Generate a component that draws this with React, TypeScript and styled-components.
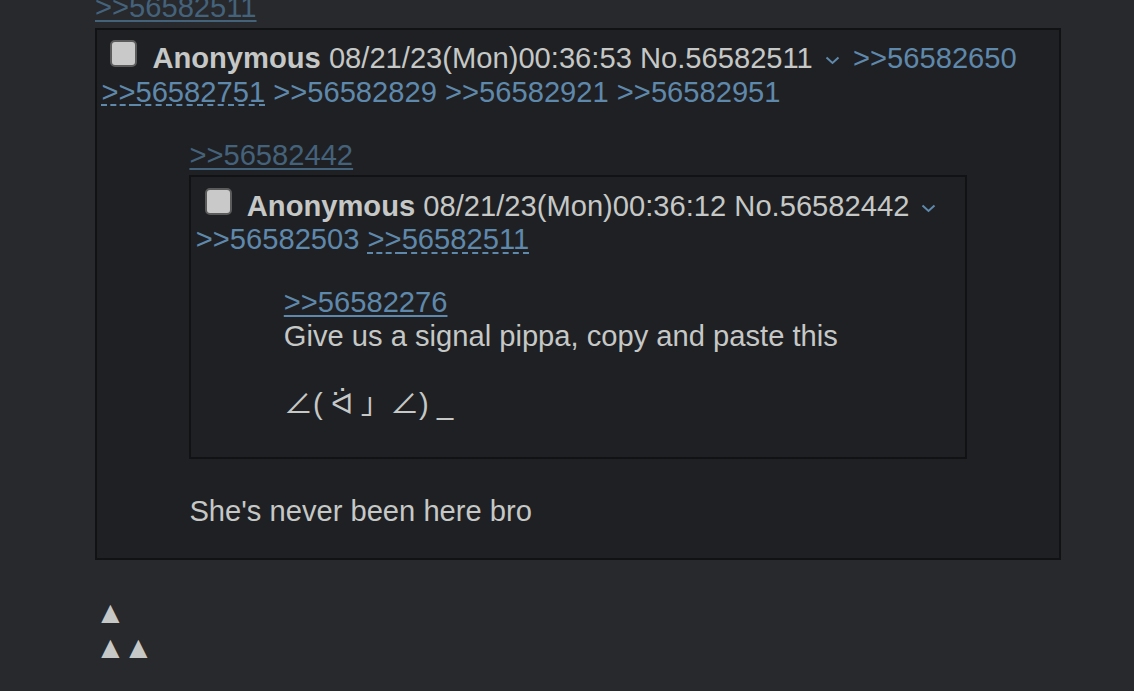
import React from "react";
import styled, { createGlobalStyle } from "styled-components";

const GlobalStyle = createGlobalStyle`
  html, body {
    margin: 0;
    padding: 0;
    background: #27292d;
    overflow: hidden;
  }
  body {
    font-family: "Liberation Sans", Arial, "Noto Sans CJK JP", sans-serif;
    font-size: 29.15px;
    line-height: 33.7px;
    color: #c5c8c6;
  }
`;

const Page = styled.div`
  margin-top: -9px;
  padding-left: 95px;
  width: 966px;
`;

const Line = styled.div``;

const QuoteLink = styled.a<{ $dim?: boolean; $dashed?: boolean; $plain?: boolean }>`
  color: ${(p) => (p.$dim ? "#45627b" : "#5f89ac")};
  cursor: pointer;
  text-decoration-line: ${(p) => (p.$plain ? "none" : "underline")};
  text-decoration-style: ${(p) => (p.$dashed ? "dashed" : "solid")};
  text-decoration-thickness: 2px;
  text-underline-offset: 3px;
`;

const Post = styled.div`
  box-sizing: border-box;
  margin: 3px 0;
  border: 2px solid #111213;
  background: #1f2023;
  padding: 4.4px;
`;

const Header = styled.div``;

const Check = styled.span`
  display: inline-block;
  box-sizing: border-box;
  width: 27px;
  height: 27px;
  margin: 6px 15px 1px 9px;
  border: 2px solid #5b5b5b;
  border-radius: 5px;
  background: #c9c9c9;
  vertical-align: baseline;
`;

const Name = styled.span`
  font-weight: bold;
  color: #c5c8c6;
`;

const Meta = styled.span`
  color: #c5c8c6;
`;

const MenuButton = styled.span`
  display: inline-block;
  width: 24px;
  padding-left: 4px;
  box-sizing: border-box;
  vertical-align: middle;
  line-height: 0;
  svg {
    display: block;
  }
`;

const Body = styled.blockquote<{ $mb?: number }>`
  margin: 29.15px 88px ${(p) => (p.$mb ?? 29.15)}px;
  padding: 0;
`;

const Text = styled.div<{ $tall?: boolean }>`
  line-height: ${(p) => (p.$tall ? "35.7px" : "33.7px")};
`;

const BlankLine = styled.div`
  height: 33.7px;
`;

const Nav = styled.div`
  margin-top: 36px;
  color: #c5c8c6;
`;

const Arrow = styled.span`
  display: inline-block;
  width: 28px;
  font-size: 31px;
`;

const Chevron = () => (
  <MenuButton>
    <svg width="15" height="9" viewBox="0 0 15 9">
      <path d="M1.5 1.5 L7.5 7 L13.5 1.5" fill="none" stroke="#5f89ac" strokeWidth="2" />
    </svg>
  </MenuButton>
);

type PostHeaderProps = {
  date: string;
  no: string;
  backlinks: { id: string; dashed?: boolean }[];
};

const PostHeader = ({ date, no, backlinks }: PostHeaderProps) => (
  <Header>
    <Check />
    <Name>Anonymous</Name> <Meta>{date}</Meta> <Meta>No.{no}</Meta> <Chevron />
    {backlinks.map((b) => (
      <React.Fragment key={b.id}>
        {" "}
        <QuoteLink $plain={!b.dashed} $dashed={b.dashed}>
          &gt;&gt;{b.id}
        </QuoteLink>
      </React.Fragment>
    ))}
  </Header>
);

export default function App() {
  return (
    <>
      <GlobalStyle />
      <Page>
        <Line>
          <QuoteLink $dim>&gt;&gt;56582511</QuoteLink>
        </Line>
        <Post>
          <PostHeader
            date="08/21/23(Mon)00:36:53"
            no="56582511"
            backlinks={[
              { id: "56582650" },
              { id: "56582751", dashed: true },
              { id: "56582829" },
              { id: "56582921" },
              { id: "56582951" },
            ]}
          />
          <Body $mb={25}>
            <Line>
              <QuoteLink $dim>&gt;&gt;56582442</QuoteLink>
            </Line>
            <Post>
              <PostHeader
                date="08/21/23(Mon)00:36:12"
                no="56582442"
                backlinks={[{ id: "56582503" }, { id: "56582511", dashed: true }]}
              />
              <Body>
                <Line>
                  <QuoteLink>&gt;&gt;56582276</QuoteLink>
                </Line>
                <Text>Give us a signal pippa, copy and paste this</Text>
                <BlankLine />
                <Text $tall>∠( ᐛ 」∠) _</Text>
              </Body>
            </Post>
            <BlankLine />
            <Text>She's never been here bro</Text>
          </Body>
        </Post>
        <Nav>
          <Line>
            <Arrow>▲</Arrow>
          </Line>
          <Line>
            <Arrow>▲</Arrow>
            <Arrow>▲</Arrow>
          </Line>
        </Nav>
      </Page>
    </>
  );
}
